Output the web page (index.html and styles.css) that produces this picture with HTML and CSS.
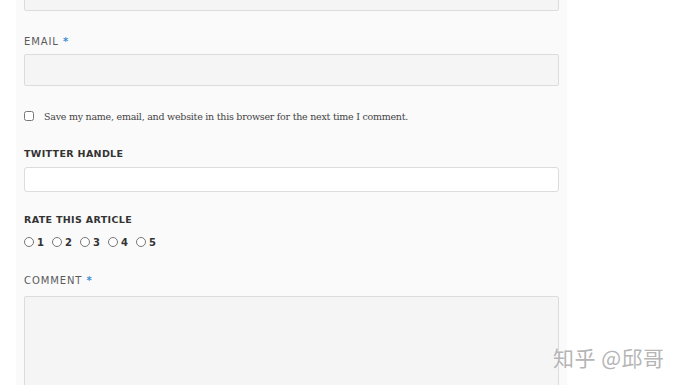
FILE: index.html
```html
<!DOCTYPE html>
<html>
<head>
<meta charset="utf-8">
<link rel="stylesheet" href="styles.css">
</head>
<body>
<div class="page">
  <form class="panel">
    <div class="field first">
      <input class="text grey" type="text">
    </div>
    <div class="field email">
      <label class="lbl light">Email <span class="req">*</span></label>
      <input class="text grey" type="text">
    </div>
    <div class="check-row">
      <input class="cb" type="checkbox">
      <span class="check-text">Save my name, email, and website in this browser for the next time I comment.</span>
    </div>
    <div class="field">
      <label class="lbl bold">Twitter Handle</label>
      <input class="text white" type="text">
    </div>
    <div class="field rating">
      <label class="lbl bold">Rate This Article</label>
      <div class="rates">
        <label class="rate"><input type="radio" name="r"><span>1</span></label>
        <label class="rate"><input type="radio" name="r"><span>2</span></label>
        <label class="rate"><input type="radio" name="r"><span>3</span></label>
        <label class="rate"><input type="radio" name="r"><span>4</span></label>
        <label class="rate"><input type="radio" name="r"><span>5</span></label>
      </div>
    </div>
    <div class="field comment">
      <label class="lbl light">Comment <span class="req">*</span></label>
      <textarea class="area"></textarea>
    </div>
  </form>
  <div class="watermark">知乎 @邱哥</div>
</div>
</body>
</html>
```
FILE: styles.css
```css
html, body {
  margin: 0;
  padding: 0;
  background: #ffffff;
  overflow: hidden;
}
.page {
  position: relative;
  width: 680px;
  height: 385px;
  overflow: hidden;
}
.panel {
  margin: 0 0 0 16px;
  width: 536px;
  padding: 0 7px 0 8px;
  background: #fafafa;
  height: 420px;
  display: flex;
  flex-direction: column;
}
.field {
  display: flex;
  flex-direction: column;
}
.field.first {
  margin-top: -21px;
}
.field.email {
  margin-top: 23px;
}
.lbl {
  display: block;
  font-family: "DejaVu Sans", sans-serif;
  font-size: 10px;
  line-height: 16px;
  text-transform: uppercase;
  margin-bottom: 4px;
}
.lbl.light {
  color: #5a5a5a;
  font-weight: normal;
  letter-spacing: 0.9px;
}
.lbl.bold {
  color: #333;
  font-weight: bold;
  font-size: 9.5px;
  letter-spacing: 0.35px;
}
.req {
  color: #3d8fd1;
  font-weight: bold;
}
.text {
  box-sizing: border-box;
  width: 535px;
  height: 32px;
  border: 1px solid #dcdcdc;
  border-radius: 2px;
  margin: 0;
  padding: 0 8px;
}
.text.grey {
  background: #f5f5f5;
}
.text.white {
  background: #ffffff;
  height: 25px;
  border-radius: 3px;
  margin-top: 1px;
}
.check-row {
  display: flex;
  align-items: center;
  margin-top: 22px;
  margin-bottom: 22px;
  height: 16px;
}
.cb {
  margin: 0 10px 0 0;
  width: 10px;
  height: 10px;
}
.check-text {
  font-family: "DejaVu Serif", serif;
  font-size: 9.5px;
  letter-spacing: -0.25px;
  color: #444;
}
.field.rating {
  margin-top: 20px;
}
.rates {
  display: flex;
  gap: 8px;
  margin-top: 4px;
  height: 12px;
  align-items: center;
}
.rate {
  display: flex;
  align-items: center;
  font-family: "DejaVu Sans", sans-serif;
  font-weight: bold;
  font-size: 10px;
  color: #333;
}
.rate input {
  margin: 0 3px 0 0;
  width: 10px;
  height: 10px;
}
.field.comment {
  margin-top: 25px;
}
.field.comment .lbl {
  margin-bottom: 7px;
}
.area {
  box-sizing: border-box;
  width: 535px;
  height: 120px;
  background: #f5f5f5;
  border: 1px solid #dcdcdc;
  border-radius: 2px;
  margin: 0;
  resize: none;
}
.watermark {
  position: absolute;
  left: 553px;
  top: 343px;
  font-family: "Noto Sans CJK SC", sans-serif;
  font-size: 21px;
  line-height: 28px;
  letter-spacing: 0.5px;
  color: #b5b5b5;
  text-shadow: 0 0 2px #fff;
}
```
